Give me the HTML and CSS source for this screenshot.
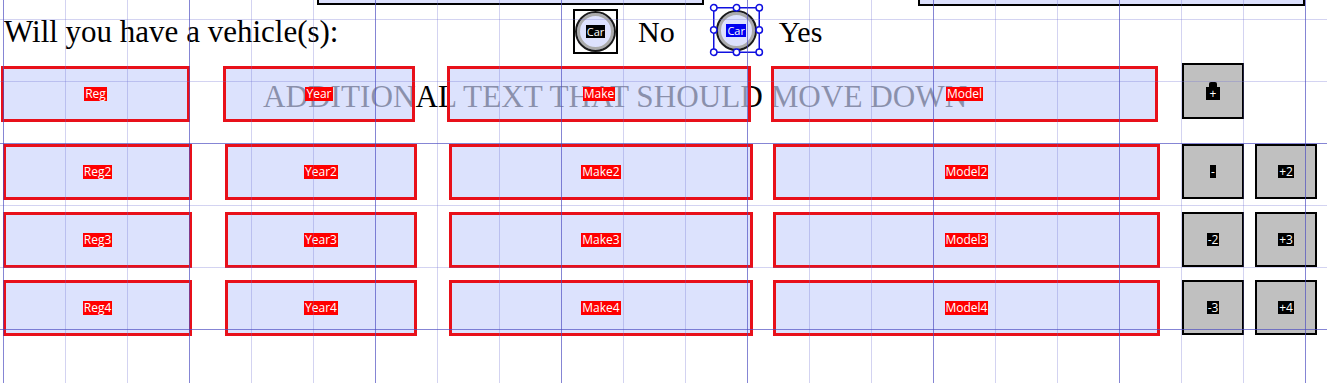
FILE: index.html
```html
<!DOCTYPE html>
<html lang="en">
<head>
  <meta charset="UTF-8" />
  <title>Vehicle Details</title>
  <link rel="stylesheet" href="styles.css">
</head>
<body>

  <div class="stubs">
    <div class="stub stub-left"></div>
    <div class="stub stub-right"></div>
  </div>

  <div class="question">
    <span class="question-text">Will you have a vehicle(s):</span>
    <div class="option">
      <div class="radio">
        <div class="dial"><span class="tag tag-car">Car</span></div>
      </div>
      <span class="option-text">No</span>
    </div>
    <div class="option">
      <div class="radio radio-selected">
        <div class="dial"><span class="tag tag-car tag-blue">Car</span></div>
        <svg class="handles" width="47" height="46" viewBox="0 0 47 46">
          <rect x="0.75" y="0.75" width="45.5" height="44.5" fill="none" stroke="#1010e0" stroke-width="1.5"/>
          <circle cx="0.75" cy="0.75" r="3.2"/>
          <circle cx="23.5" cy="0.75" r="3.2"/>
          <circle cx="46.25" cy="0.75" r="3.2"/>
          <circle cx="0.75" cy="23" r="3.2"/>
          <circle cx="46.25" cy="23" r="3.2"/>
          <circle cx="0.75" cy="45.25" r="3.2"/>
          <circle cx="23.5" cy="45.25" r="3.2"/>
          <circle cx="46.25" cy="45.25" r="3.2"/>
        </svg>
      </div>
      <span class="option-text">Yes</span>
    </div>
  </div>

  <div class="rows">
    <div class="row-first">
      <div class="extra-text">ADDITIONAL TEXT THAT SHOULD MOVE DOWN</div>
      <div class="fields">
        <div class="field field-reg"><span class="tag">Reg</span></div>
        <div class="field field-year"><span class="tag">Year</span></div>
        <div class="field field-make"><span class="tag">Make</span></div>
        <div class="field field-model"><span class="tag">Model</span></div>
        <div class="btn"><span class="tag tag-plus">+</span></div>
      </div>
    </div>

    <div class="row">
      <div class="field field-reg"><span class="tag">Reg2</span></div>
      <div class="field field-year"><span class="tag">Year2</span></div>
      <div class="field field-make"><span class="tag">Make2</span></div>
      <div class="field field-model"><span class="tag">Model2</span></div>
      <div class="btn"><span class="tag">-</span></div>
      <div class="btn btn-add"><span class="tag">+2</span></div>
    </div>

    <div class="row">
      <div class="field field-reg"><span class="tag">Reg3</span></div>
      <div class="field field-year"><span class="tag">Year3</span></div>
      <div class="field field-make"><span class="tag">Make3</span></div>
      <div class="field field-model"><span class="tag">Model3</span></div>
      <div class="btn"><span class="tag">-2</span></div>
      <div class="btn btn-add"><span class="tag">+3</span></div>
    </div>

    <div class="row">
      <div class="field field-reg"><span class="tag">Reg4</span></div>
      <div class="field field-year"><span class="tag">Year4</span></div>
      <div class="field field-make"><span class="tag">Make4</span></div>
      <div class="field field-model"><span class="tag">Model4</span></div>
      <div class="btn"><span class="tag">-3</span></div>
      <div class="btn btn-add"><span class="tag">+4</span></div>
    </div>
  </div>

  <div class="grid-overlay"></div>

</body>
</html>
```

FILE: styles.css
```css
body {
  margin: 0;
  font-family: "Liberation Serif", serif;
  background-color: #fff;
  color: #000;
  overflow: hidden;
}

.grid-overlay {
  position: fixed;
  top: 0;
  left: 0;
  right: 0;
  bottom: 0;
  pointer-events: none;
  background-image:
    linear-gradient(to right, rgba(70, 70, 190, 0.55) 1px, transparent 1px),
    linear-gradient(to bottom, rgba(70, 70, 190, 0.55) 1px, transparent 1px),
    linear-gradient(to right, rgba(110, 110, 210, 0.3) 1px, transparent 1px),
    linear-gradient(to bottom, rgba(110, 110, 210, 0.3) 1px, transparent 1px);
  background-size: 186px 100%, 100% 186px, 62px 100%, 100% 62px;
  background-position: 3px 0, 0 143px, 3px 0, 0 19px;
}

.stubs {
  display: flex;
  align-items: flex-start;
  height: 6px;
}

.stub {
  background-color: #dce0fd;
  border: 2px solid #000;
  border-top: 0;
  box-sizing: border-box;
  width: 387px;
}

.stub-left {
  margin-left: 317px;
  height: 5px;
}

.stub-right {
  margin-left: 214px;
  height: 6px;
}

.question {
  display: flex;
  align-items: flex-start;
  height: 48px;
}

.question-text {
  width: 573px;
  padding-left: 4px;
  box-sizing: border-box;
  margin-top: 9px;
  font-size: 31px;
  line-height: 34px;
  white-space: nowrap;
}

.option {
  display: flex;
  align-items: flex-start;
}

.option + .option {
  margin-left: 38px;
}

.option-text {
  margin-left: 20px;
  margin-top: 9px;
  font-size: 30px;
  line-height: 34px;
}

.radio-selected + .option-text {
  margin-left: 19px;
}

.radio {
  width: 45px;
  height: 45px;
  margin-top: 3px;
  border: 2px solid #000;
  box-sizing: border-box;
  display: flex;
  align-items: center;
  justify-content: center;
}

.radio-selected {
  position: relative;
  width: 47px;
  height: 46px;
  margin-top: 1px;
  border: 0;
}

.dial {
  width: 41px;
  height: 41px;
  flex-shrink: 0;
  border-radius: 50%;
  border: 2px solid #1a1a1a;
  box-shadow: inset 0 0 0 3px #ababab;
  background-color: #dde1fd;
  box-sizing: border-box;
  display: flex;
  align-items: center;
  justify-content: center;
}

.handles {
  position: absolute;
  top: 0;
  left: 0;
  overflow: visible;
}

.handles circle {
  fill: #fff;
  stroke: #1010e0;
  stroke-width: 1.5;
}

.tag {
  font-family: "Open Sans", sans-serif;
  font-size: 12px;
  line-height: 14px;
  padding: 0 1px;
  background-color: #f00;
  color: #fff;
  white-space: nowrap;
}

.tag-car {
  font-size: 11px;
  line-height: 13px;
  background-color: #000;
}

.tag-blue {
  background-color: #0000f0;
}

.rows {
  margin-top: 9px;
}

.row-first {
  display: grid;
}

.row-first > * {
  grid-area: 1 / 1;
}

.extra-text {
  padding-left: 263px;
  margin-top: 17px;
  font-size: 31.2px;
  line-height: 34px;
  white-space: nowrap;
}

.fields {
  display: flex;
  align-items: flex-start;
  padding-left: 1px;
}

.fields .field {
  margin-top: 3px;
}

.row {
  display: flex;
  align-items: flex-start;
  padding-left: 3px;
  margin-top: 12px;
}

.row-first + .row {
  margin-top: 22px;
}

.field {
  height: 56px;
  border: 3px solid #e8101a;
  background-color: rgba(203, 212, 252, 0.68);
  box-sizing: border-box;
  display: flex;
  align-items: center;
  justify-content: center;
}

.field-reg {
  width: 189px;
}

.field-year {
  width: 192px;
  margin-left: 33px;
}

.field-make {
  width: 304px;
  margin-left: 32px;
}

.field-model {
  width: 387px;
  margin-left: 20px;
}

.btn {
  width: 62px;
  height: 55px;
  margin-left: 22px;
  border: 2px solid #000;
  background-color: #c0c0c0;
  box-sizing: border-box;
  display: flex;
  align-items: center;
  justify-content: center;
}

.fields .btn {
  margin-left: 24px;
  height: 56px;
}

.btn .tag {
  background-color: #000;
  line-height: 13px;
}

.btn-add {
  margin-left: 11px;
}

.tag-plus {
  position: relative;
  padding: 0 4px;
  line-height: 11px;
  margin-top: 5px;
}

.tag-plus::before {
  content: "";
  position: absolute;
  left: 3px;
  right: 3px;
  top: -5px;
  height: 5px;
  background-color: #000;
  border-radius: 2px 2px 0 0;
}
```
